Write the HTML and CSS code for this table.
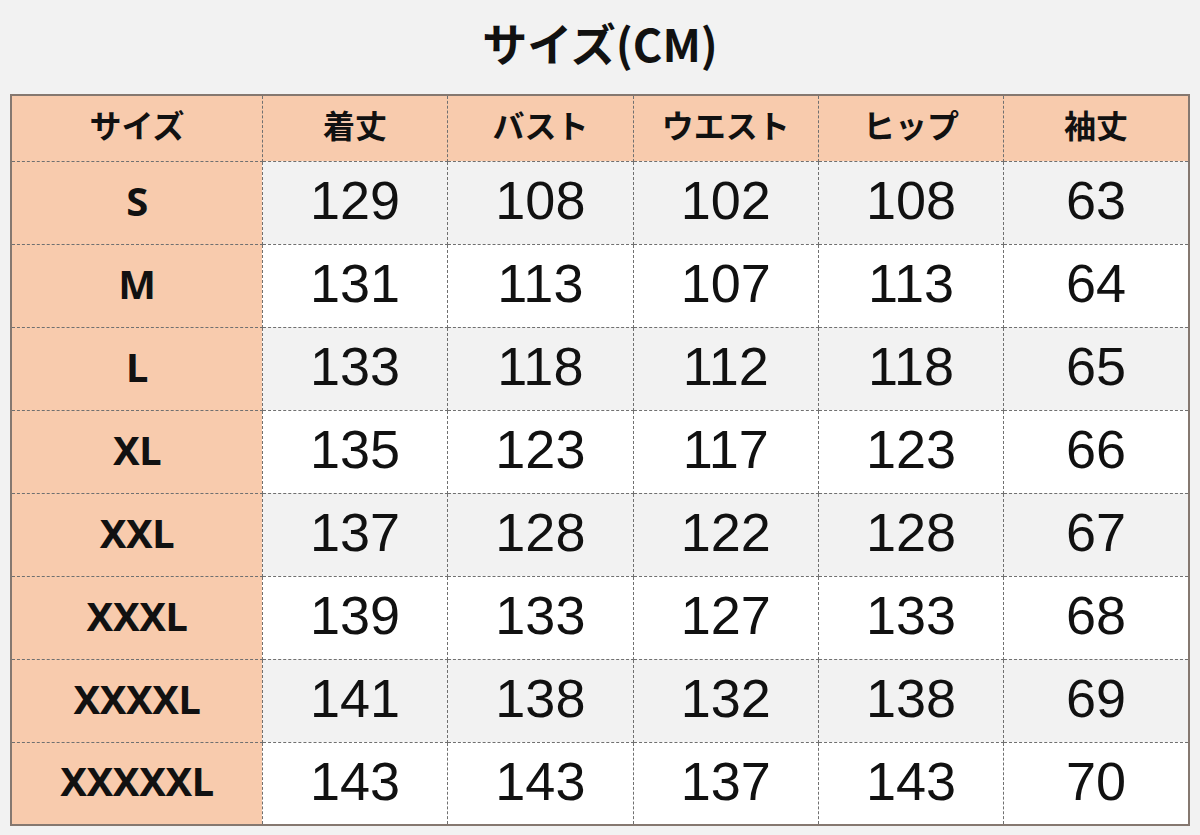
FILE: index.html
```html
<!DOCTYPE html>
<html lang="ja">
<head>
<meta charset="utf-8">
<title>サイズ(CM)</title>
<link rel="stylesheet" href="styles.css">
</head>
<body>
<div class="page">
  <h1 class="title">サイズ(CM)</h1>
  <table class="size-table">
    <colgroup>
      <col class="c-size"><col class="c-val"><col class="c-val"><col class="c-val"><col class="c-val"><col class="c-val">
    </colgroup>
    <thead>
      <tr><th>サイズ</th><th>着丈</th><th>バスト</th><th>ウエスト</th><th>ヒップ</th><th>袖丈</th></tr>
    </thead>
    <tbody>
      <tr class="odd"><th>S</th><td>129</td><td>108</td><td>102</td><td>108</td><td>63</td></tr>
      <tr class="even"><th>M</th><td>131</td><td>113</td><td>107</td><td>113</td><td>64</td></tr>
      <tr class="odd"><th>L</th><td>133</td><td>118</td><td>112</td><td>118</td><td>65</td></tr>
      <tr class="even"><th>XL</th><td>135</td><td>123</td><td>117</td><td>123</td><td>66</td></tr>
      <tr class="odd"><th>XXL</th><td>137</td><td>128</td><td>122</td><td>128</td><td>67</td></tr>
      <tr class="even"><th>XXXL</th><td>139</td><td>133</td><td>127</td><td>133</td><td>68</td></tr>
      <tr class="odd"><th>XXXXL</th><td>141</td><td>138</td><td>132</td><td>138</td><td>69</td></tr>
      <tr class="even"><th>XXXXXL</th><td>143</td><td>143</td><td>137</td><td>143</td><td>70</td></tr>
    </tbody>
  </table>
</div>
</body>
</html>
```
FILE: styles.css
```css
html, body {
  margin: 0;
  padding: 0;
  background: #f2f2f2;
}
.page {
  width: 1200px;
  height: 835px;
  padding: 0 10px;
  box-sizing: border-box;
}
.title {
  margin: 0;
  height: 94px;
  display: flex;
  align-items: center;
  justify-content: center;
  font-family: "Noto Sans CJK JP", "Noto Sans", sans-serif;
  font-weight: 700;
  font-size: 45px;
  color: #111;
  padding-bottom: 10px;
  box-sizing: border-box;
}
.size-table {
  width: 1180px;
  border-collapse: collapse;
  table-layout: fixed;
  border: 2px solid #857870;
}
.c-size { width: 251px; }
.c-val { width: 185px; }
.size-table th,
.size-table td {
  border: 1px dashed #707070;
  text-align: center;
  vertical-align: middle;
  padding: 0 0 5px;
  color: #111;
}
.size-table thead th {
  height: 66px;
  background: #f8cbad;
  font-family: "Noto Sans CJK JP", sans-serif;
  font-weight: 700;
  font-size: 32px;
  padding-bottom: 8px;
  box-sizing: border-box;
}
.size-table tbody tr { height: 83px; }
.size-table tbody th {
  background: #f8cbad;
  font-family: "Noto Sans", sans-serif;
  font-weight: 700;
  font-size: 40px;
  letter-spacing: -0.5px;
}
.size-table tbody td {
  font-family: "Liberation Sans", Arial, sans-serif;
  font-size: 54px;
}
.size-table tr.odd td { background: #f2f2f2; }
.size-table tr.even td { background: #ffffff; }
```
